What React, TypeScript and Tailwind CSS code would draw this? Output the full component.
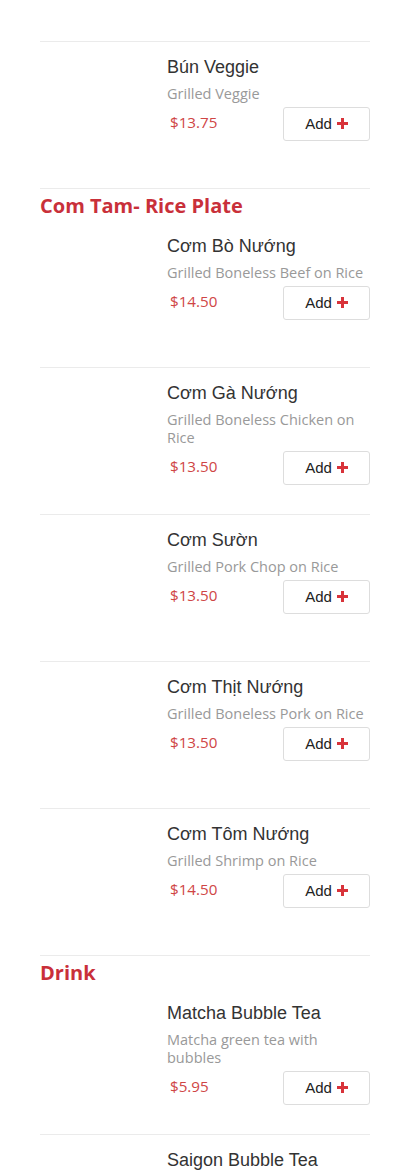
import { Fragment } from 'react'

type Item = { name: string; desc: string; price: string }
type Section = { title?: string; items: Item[] }

const sections: Section[] = [
  { items: [{ name: 'Bún Veggie', desc: 'Grilled Veggie', price: '$13.75' }] },
  {
    title: 'Com Tam- Rice Plate',
    items: [
      { name: 'Cơm Bò Nướng', desc: 'Grilled Boneless Beef on Rice', price: '$14.50' },
      { name: 'Cơm Gà Nướng', desc: 'Grilled Boneless Chicken on Rice', price: '$13.50' },
      { name: 'Cơm Sườn', desc: 'Grilled Pork Chop on Rice', price: '$13.50' },
      { name: 'Cơm Thịt Nướng', desc: 'Grilled Boneless Pork on Rice', price: '$13.50' },
      { name: 'Cơm Tôm Nướng', desc: 'Grilled Shrimp on Rice', price: '$14.50' },
    ],
  },
  {
    title: 'Drink',
    items: [
      { name: 'Matcha Bubble Tea', desc: 'Matcha green tea with bubbles', price: '$5.95' },
      { name: 'Saigon Bubble Tea', desc: '', price: '' },
    ],
  },
]

function MenuItem({ item }: { item: Item }) {
  return (
    <div className="flex h-[147px] shrink-0 gap-3 border-b border-[#ebebeb] pt-[14px]">
      {/* photo slot, empty */}
      <div className="w-[115px] shrink-0" />
      <div className="flex min-w-0 flex-1 flex-col">
        <div className="text-[18px] leading-[22px] text-[#333] [font-family:'Liberation_Sans',Arial,sans-serif]">
          {item.name}
        </div>
        {item.desc && (
          <div className="mt-[7px] text-[14.5px] leading-[18px] text-[#999] [font-family:'Open_Sans',sans-serif]">
            {item.desc}
          </div>
        )}
        {item.price && (
          <div className="mt-1 flex items-start justify-between">
            <span className="ml-[3px] mt-[4px] text-[15.2px] leading-[22px] text-[#cf4545] [font-family:'Open_Sans',sans-serif]">
              {item.price}
            </span>
            <button className="flex h-[34px] w-[87px] items-center justify-center gap-[5px] rounded-[3px] border border-[#dddddd] bg-white text-[15px] text-[#222] [font-family:'Liberation_Sans',Arial,sans-serif]">
              Add
              <svg width="11" height="11" viewBox="0 0 11 11" className="mt-[-1px]">
                <rect x="4" y="0" width="3" height="11" fill="#d8333a" />
                <rect x="0" y="4" width="11" height="3" fill="#d8333a" />
              </svg>
            </button>
          </div>
        )}
      </div>
    </div>
  )
}

export default function App() {
  return (
    <div className="h-[1174px] overflow-hidden bg-white px-10">
      <div className="flex flex-col">
        <div className="h-[42px] shrink-0 border-b border-[#ebebeb]" />
        {sections.map((s, si) => (
          <Fragment key={si}>
            {s.title && (
              <h2 className="h-[32px] shrink-0 pt-[3px] text-[20px] font-bold leading-[28px] text-[#c9303a] [font-family:'Open_Sans',sans-serif]">
                {s.title}
              </h2>
            )}
            {s.items.map((it, i) => (
              <MenuItem key={i} item={it} />
            ))}
          </Fragment>
        ))}
      </div>
    </div>
  )
}
